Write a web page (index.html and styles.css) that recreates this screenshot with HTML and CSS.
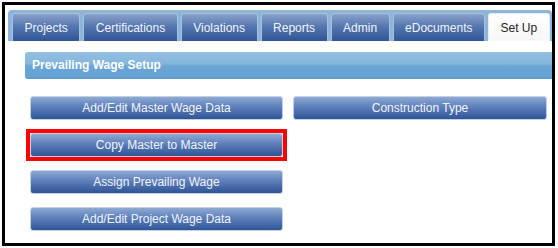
FILE: index.html
```html
<!DOCTYPE html>
<html lang="en">
<head>
    <meta charset="UTF-8">
    <meta name="viewport" content="width=device-width, initial-scale=1.0">
    <title>Prevailing Wage Setup</title>
    <link rel="stylesheet" href="styles.css">
</head>
<body>
    <div class="frame">
        <div class="tabs">
            <a class="tab">Projects</a>
            <a class="tab">Certifications</a>
            <a class="tab">Violations</a>
            <a class="tab">Reports</a>
            <a class="tab">Admin</a>
            <a class="tab">eDocuments</a>
            <a class="tab active">Set Up</a>
        </div>
        <div class="content">
            <div class="section-title">Prevailing Wage Setup</div>
            <div class="actions">
                <button class="btn">Add/Edit Master Wage Data</button>
                <button class="btn">Construction Type</button>
                <div class="highlight">
                    <button class="btn">Copy Master to Master</button>
                </div>
                <span></span>
                <button class="btn">Assign Prevailing Wage</button>
                <span></span>
                <button class="btn">Add/Edit Project Wage Data</button>
            </div>
        </div>
    </div>
</body>
</html>
```
FILE: styles.css
```css
body {
    margin: 0;
    background: #fff;
    font-family: "Liberation Sans", Arial, sans-serif;
}
.frame {
    box-sizing: border-box;
    margin: 2px;
    width: 553px;
    height: 244px;
    border: 3px solid #000;
    overflow: hidden;
    background: #fff;
}
.tabs {
    display: flex;
    gap: 3px;
    margin: 5px 0 0 3px;
    padding: 3px 0 0 4px;
    background: #8db5da;
    border-radius: 4px 4px 0 0;
}
.tab {
    height: 28px;
    line-height: 28px;
    padding: 0 11.5px;
    border: 1px solid #a7c0df;
    border-bottom: none;
    border-radius: 3px 3px 0 0;
    box-sizing: border-box;
    background: linear-gradient(#8aa3cc, #5677b0 45%, #2f5596);
    color: #f2f5fa;
    font-size: 12px;
    white-space: nowrap;
}
.tab.active {
    background: linear-gradient(#fff, #f6f7f9);
    border-color: #e4ebf3;
    color: #222;
}
.content {
    padding: 11px 0 0 20px;
}
.section-title {
    height: 27px;
    line-height: 27px;
    margin-right: -10px;
    padding-left: 7px;
    border-radius: 3px 0 0 3px;
    background: linear-gradient(#94c0e2, #84b6dc 45%, #6aa5d4 55%, #65a1d2);
    border-bottom: 1px solid #5a97cb;
    box-sizing: border-box;
    color: #fff;
    font-size: 12px;
    font-weight: bold;
}
.actions {
    display: grid;
    grid-template-columns: 253px 254px;
    column-gap: 10px;
    row-gap: 13px;
    margin: 17px 0 0 5px;
}
.btn {
    width: 100%;
    height: 24px;
    padding: 0;
    border: 1px solid #c3d1e5;
    border-radius: 3px;
    background: linear-gradient(#8ea9d3, #6283bd 40%, #2f5597);
    color: #f2f5fa;
    font-family: "Liberation Sans", Arial, sans-serif;
    font-size: 12px;
    cursor: pointer;
}
.highlight {
    display: flex;
    margin: -4px;
    border: 4px solid #f00;
}
```
